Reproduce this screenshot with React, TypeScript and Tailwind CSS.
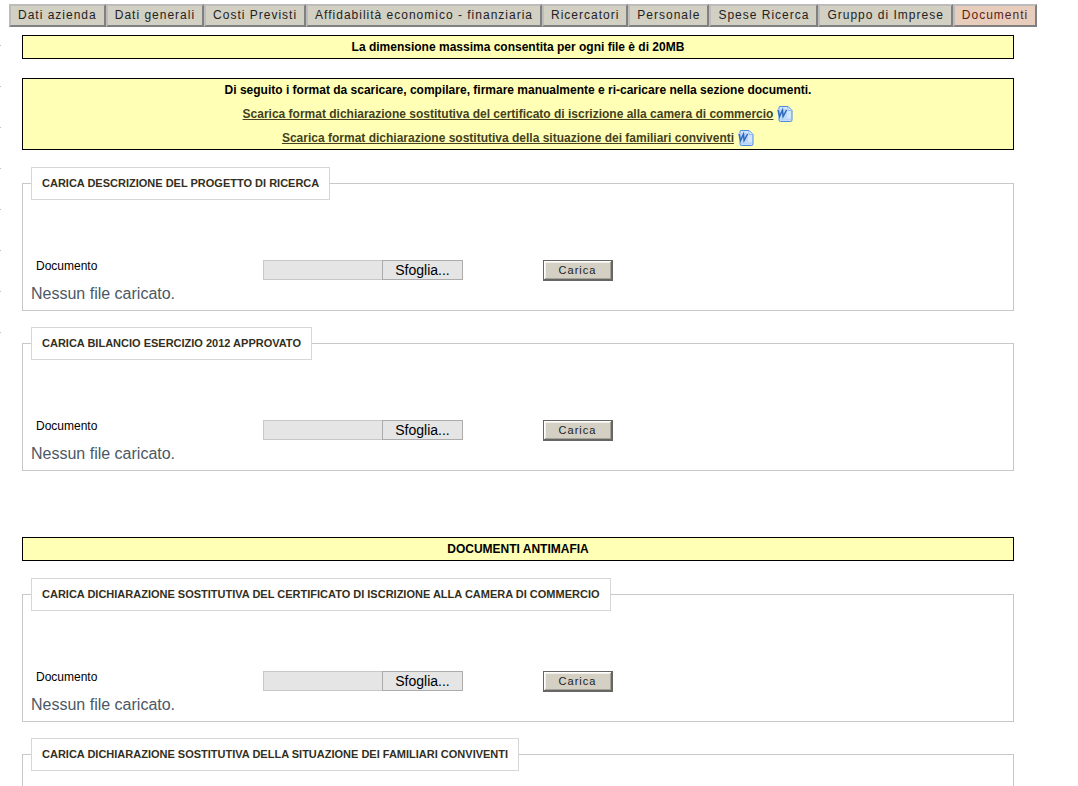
import React from 'react';

const TABS = [
    'Dati azienda',
    'Dati generali',
    'Costi Previsti',
    'Affidabilità economico - finanziaria',
    'Ricercatori',
    'Personale',
    'Spese Ricerca',
    'Gruppo di Imprese',
    'Documenti',
];

const ACTIVE_TAB = 'Documenti';

// Side rule marks left of the content
const MARKS = [0, 1, 2, 3, 4, 5, 6, 7];

const WordIcon: React.FC = () => (
    <svg width="16" height="16" viewBox="0 0 16 16" className="shrink-0" aria-hidden="true">
        <path d="M2.5 0.5H11l4 4V14a1.5 1.5 0 0 1-1.5 1.5h-10a1.5 1.5 0 0 1-1.5-1.5V1z" fill="#d3e6fc" stroke="#4f8ce0" />
        <path d="M11 0.8v3.7h3.8z" fill="#f4f9ff" stroke="#7fb0ee" strokeWidth="0.8" />
        <path d="M3 12.5h11v2H3z" fill="#b4d3f8" />
        <path d="M0 3h10v9H1.5z" fill="#bcd7f8" />
        <path d="M1.2 4l1.3 6.5L5.5 4l0.6 6.5L9.6 4" fill="none" stroke="#2c69bd" strokeWidth="1.5" />
    </svg>
);

interface NoticeProps {
    children: React.ReactNode;
}

const Notice: React.FC<NoticeProps> = ({ children }) => (
    <div className="border border-black bg-[#ffffb5] text-center text-xs leading-[22px] font-bold text-black">
        {children}
    </div>
);

interface FormatLinkProps {
    label: string;
}

const FormatLink: React.FC<FormatLinkProps> = ({ label }) => (
    <div className="flex h-6 items-center justify-center gap-1 pt-0.5">
        <a href="#" className="text-[#443f1e] underline">{label}</a>
        <WordIcon />
    </div>
);

interface UploadSectionProps {
    id: string;
    title: string;
}

const UploadSection: React.FC<UploadSectionProps> = ({ id, title }) => (
    <fieldset className="border border-[#c8c8c8] px-2 pt-15 pb-[3px]">
        <legend className="border border-[#d6d6d6] px-2.5 py-2 text-[11px] leading-[15px] font-bold text-[#332f20]">
            {title}
        </legend>
        <div className="flex items-start">
            <label htmlFor={id} className="w-58 pl-[5px] text-xs leading-3 text-black">
                Documento
            </label>
            <div className="flex h-5 w-[200px]">
                <input
                    id={id}
                    type="text"
                    readOnly
                    className="min-w-0 flex-1 border border-r-0 border-[#c8c8c8] bg-[#e5e5e5]"
                />
                <button
                    type="button"
                    className="w-[81px] border border-[#acacac] bg-[#e5e5e5] text-sm leading-4 text-black"
                >
                    Sfoglia...
                </button>
            </div>
            <button
                type="submit"
                className="ml-20 h-[21px] w-[70px] border-t border-r-2 border-b-2 border-l border-[#666666] bg-[#d4d0c4] text-[11px] leading-4 tracking-[1px] text-[#222222] shadow-[inset_1px_1px_0_#ffffff,inset_-1px_-1px_0_#a5a296,inset_2px_2px_0_#f1efe8]"
            >
                Carica
            </button>
        </div>
        <p className="text-base leading-[26px] text-[#4b5866]">Nessun file caricato.</p>
    </fieldset>
);

const App: React.FC = () => {
    return (
        <div className="bg-white font-['Liberation_Sans',Arial,sans-serif]">
            <nav className="flex pt-1 pl-[9px]">
                {TABS.map((tab) => (
                    <button
                        key={tab}
                        type="button"
                        className={`border-2 border-t-[#bcbcbc] border-r-[#808080] border-b-[#808080] border-l-[#bcbcbc] px-[7px] text-xs leading-[19px] tracking-[1px] whitespace-nowrap ${
                            tab === ACTIVE_TAB
                                ? 'bg-[#e8cdbd] text-[#5a1e14]'
                                : 'bg-[#d2cfc3] text-[#222222]'
                        }`}
                    >
                        {tab}
                    </button>
                ))}
            </nav>

            <div className="flex">
                <div className="flex w-px flex-col gap-10 pt-[18px]">
                    {MARKS.map((mark) => (
                        <div key={mark} className="h-px bg-[#c0c0c0]" />
                    ))}
                </div>

                <main className="mr-16 ml-[21px] flex-1 pt-2 pb-4">
                    <Notice>La dimensione massima consentita per ogni file è di 20MB</Notice>

                    <div className="mt-[19px]">
                        <Notice>
                            <p>Di seguito i format da scaricare, compilare, firmare manualmente e ri-caricare nella sezione documenti.</p>
                            <FormatLink label="Scarica format dichiarazione sostitutiva del certificato di iscrizione alla camera di commercio" />
                            <FormatLink label="Scarica format dichiarazione sostitutiva della situazione dei familiari conviventi" />
                        </Notice>
                    </div>

                    <form className="mt-[17px] flex flex-col gap-4">
                        <UploadSection id="progetto" title="CARICA DESCRIZIONE DEL PROGETTO DI RICERCA" />
                        <UploadSection id="bilancio" title="CARICA BILANCIO ESERCIZIO 2012 APPROVATO" />
                    </form>

                    <div className="mt-[66px]">
                        <Notice>DOCUMENTI ANTIMAFIA</Notice>
                    </div>

                    <form className="mt-[17px] flex flex-col gap-4">
                        <UploadSection id="certificato" title="CARICA DICHIARAZIONE SOSTITUTIVA DEL CERTIFICATO DI ISCRIZIONE ALLA CAMERA DI COMMERCIO" />
                        <UploadSection id="familiari" title="CARICA DICHIARAZIONE SOSTITUTIVA DELLA SITUAZIONE DEI FAMILIARI CONVIVENTI" />
                    </form>
                </main>
            </div>
        </div>
    );
};

export default App;
